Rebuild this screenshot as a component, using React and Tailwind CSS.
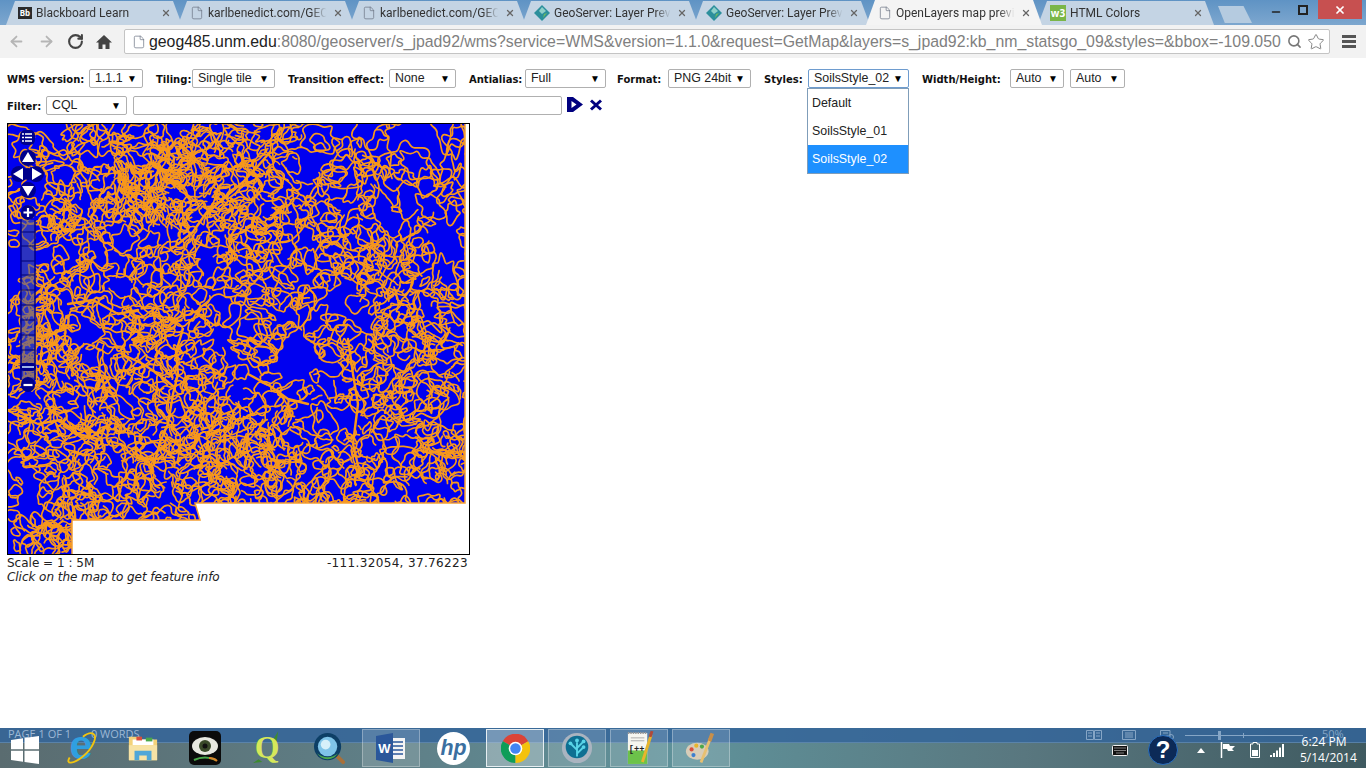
import { ArrowLeft, ArrowRight, RotateCw, File, Search, Star, X, Minus } from 'lucide-react';

// ─── Map drawing ──────────────────────────────────────────────────────────────
const makeRandom = (seed) => () => {
  seed = (seed + 0x6d2b79f5) | 0;
  let t = Math.imul(seed ^ (seed >>> 15), 1 | seed);
  t = (t + Math.imul(t ^ (t >>> 7), 61 | t)) ^ t;
  return ((t ^ (t >>> 14)) >>> 0) / 4294967296;
};

const SHAPE = '0,0 457,0 457,379 187,379 192,396 64,396 64,431 0,431';
const SHAPE_EDGE = '457,0 457,379 187,379 192,396 64,396 64,431';

// blue patches that the soil lines stay out of
const VOIDS = [
  [405, 18, 42, 14], [320, 8, 26, 7], [88, 32, 20, 9], [42, 8, 18, 6], [438, 120, 16, 26], [288, 238, 24, 14],
  [335, 180, 14, 20], [225, 215, 14, 9], [22, 370, 12, 22], [125, 275, 13, 9], [420, 368, 24, 8], [410, 70, 18, 11],
  [205, 38, 10, 6], [290, 108, 15, 7], [395, 320, 13, 9], [250, 350, 11, 7], [445, 290, 10, 15], [380, 245, 7, 14],
  [160, 372, 12, 6], [80, 210, 12, 7], [20, 130, 11, 8], [110, 345, 11, 7], [345, 60, 14, 8], [215, 170, 10, 6],
  [60, 120, 10, 7], [300, 40, 12, 7], [380, 105, 11, 8], [150, 110, 9, 6], [340, 295, 12, 9], [35, 60, 10, 7],
];

const HOTSPOTS = [
  [175, 65, 50], [115, 50, 35], [240, 70, 35], [165, 320, 40], [270, 40, 25], [30, 230, 35], [130, 180, 40], [100, 300, 40],
  [405, 250, 35], [385, 150, 25], [240, 300, 40], [330, 350, 35], [60, 90, 25], [420, 340, 25], [50, 400, 25],
];

const inVoid = (x, y) => VOIDS.some(([cx, cy, rx, ry]) => ((x - cx) / rx) ** 2 + ((y - cy) / ry) ** 2 < 1);

const heat = (x, y) => {
  let d = 0;
  for (const [cx, cy, r] of HOTSPOTS) d += Math.exp(-((x - cx) ** 2 + (y - cy) ** 2) / (r * r));
  return d;
};

// smooth a run of points with quadratic curves through their midpoints
const smoothPath = (pts, closed) => {
  const mid = (a, b) => `${((a[0] + b[0]) / 2).toFixed(1)} ${((a[1] + b[1]) / 2).toFixed(1)}`;
  const n = pts.length;
  if (closed) {
    let d = `M${mid(pts[n - 1], pts[0])}`;
    for (let i = 0; i < n; i++) d += `Q${pts[i][0].toFixed(1)} ${pts[i][1].toFixed(1)} ${mid(pts[i], pts[(i + 1) % n])}`;
    return d + 'Z';
  }
  let d = `M${pts[0][0].toFixed(1)} ${pts[0][1].toFixed(1)}`;
  for (let i = 1; i < n - 1; i++) d += `Q${pts[i][0].toFixed(1)} ${pts[i][1].toFixed(1)} ${mid(pts[i], pts[i + 1])}`;
  return d;
};

const buildSoilLines = () => {
  const rand = makeRandom(485);
  const lines = [];

  // closed soil units on a jittered grid, so the whole state is covered by cells
  for (let gy = 0; gy < 432; gy += 12) {
    for (let gx = 0; gx < 460; gx += 12) {
      const cx = gx + rand() * 12;
      const cy = gy + rand() * 12;
      if (inVoid(cx, cy) || rand() > 0.6) continue;
      const r = 4 + rand() * rand() * 22;
      const squash = 0.35 + rand() * 0.7;
      const tilt = rand() * Math.PI;
      const n = 8 + Math.floor(r / 1.5);
      const pts = [];
      for (let k = 0; k < n; k++) {
        const a = (k / n) * Math.PI * 2;
        const w = 0.6 + rand() * 0.8;
        const px = Math.cos(a) * r * w;
        const py = Math.sin(a) * r * w * squash;
        pts.push([cx + px * Math.cos(tilt) - py * Math.sin(tilt), cy + px * Math.sin(tilt) + py * Math.cos(tilt)]);
      }
      lines.push(smoothPath(pts, true));
    }
  }

  // winding lines, tighter and more of them where the map clumps to solid orange
  for (let i = 0; i < 2400; i++) {
    let x = rand() * 460;
    let y = rand() * 432;
    const h = heat(x, y);
    if (rand() > 0.16 + h * 0.85 || inVoid(x, y)) continue;
    let angle = rand() * Math.PI * 2;
    const steps = 4 + Math.floor(rand() * 16);
    const pts = [[x, y]];
    for (let s = 0; s < steps; s++) {
      angle += (rand() - 0.5) * 2.2;
      x += Math.cos(angle) * 3.2;
      y += Math.sin(angle) * 3.2;
      if (inVoid(x, y)) break;
      pts.push([x, y]);
    }
    if (pts.length > 2) lines.push(smoothPath(pts, false));
  }
  return lines;
};

const SOIL_LINES = buildSoilLines();

// the heavier strands that run across the map
const STRANDS = [
  'M146 340L152 318L160 300L165 270L170 250L168 228L175 205',
  'M165 262L150 250L135 240L118 232',
  'M196 92L215 75L235 58L250 42L262 28',
  'M170 120L185 108L196 92L205 80',
  'M340 215L345 250L350 280L345 320L352 350',
  'M8 290L30 300L52 296L70 310L90 315',
  'M60 180L85 176L110 190L130 186',
  'M240 250L262 262L280 275L300 280',
];

const MapDrawing = () => (
  <svg viewBox="0 0 461 430" className="block w-[461px] h-[430px] blur-[0.35px]">
    <defs>
      <clipPath id="nm-shape">
        <polygon points={SHAPE} />
      </clipPath>
    </defs>
    <polygon points={SHAPE} fill="#0000f0" />
    <g clipPath="url(#nm-shape)" fill="none" stroke="#f7981c" strokeLinejoin="round" strokeLinecap="round">
      <g strokeWidth="1.7">
        {SOIL_LINES.map((d, i) => <path key={i} d={d} />)}
      </g>
      <g strokeWidth="2.400">
        {STRANDS.map((d, i) => <path key={i} d={d} />)}
      </g>
    </g>
    <polyline points={SHAPE_EDGE} fill="none" stroke="#f5a033" strokeWidth="1.500" />

    {/* layer switcher */}
    <rect x="12" y="6" width="15" height="15" rx="5" fill="#00008b" />
    <g stroke="#fff" strokeWidth="1.6">
      <path d="M17 10H24M17 13.500H24M17 17H24" />
      <path d="M14 10H16M14 13.500H16M14 17H16" />
    </g>

    {/* pan buttons */}
    <g fill="#00008b">
      <circle cx="20" cy="34" r="8" />
      <circle cx="11" cy="50" r="8" />
      <circle cx="28" cy="50" r="8" />
      <circle cx="20" cy="66" r="8" />
      <circle cx="20" cy="50" r="6" />
    </g>
    <g fill="#fff">
      <path d="M20 28L26 38H14Z" />
      <path d="M5 50L15 44V56Z" />
      <path d="M34 50L24 44V56Z" />
      <path d="M20 72L26 62H14Z" />
    </g>

    {/* zoom bar */}
    <rect x="13" y="96" width="14" height="160" fill="#4a55a0" fillOpacity="0.6" />
    <g stroke="#00006e" strokeWidth="1">
      {[108, 122, 137, 151, 166, 181, 196, 211, 226, 240].map((y) => <path key={y} d={`M13 ${y}H27`} />)}
    </g>
    <path d="M13 96V256M27 96V256" stroke="#00008b" strokeWidth="1.5" />
    <rect x="13" y="81" width="14" height="15" rx="7" fill="#00008b" />
    <path d="M20 84V93M15.500 88.500H24.500" stroke="#fff" strokeWidth="2.200" />
    <rect x="12" y="239" width="16" height="8" rx="4" fill="#00008b" />
    <path d="M14 243H26" stroke="#9db4e8" strokeWidth="2" />
    <rect x="13" y="253" width="14" height="15" rx="7" fill="#00008b" />
    <path d="M15.500 261H24.500" stroke="#fff" strokeWidth="2.200" />
  </svg>
);

// ─── Browser chrome ───────────────────────────────────────────────────────────
const GeoServerIcon = () => (
  <svg viewBox="0 0 16 16" className="w-4 h-4 shrink-0">
    <path d="M8 0L16 8L8 16L0 8Z" fill="#2c8f9c" />
    <path d="M8 2L12 6L8 9L5 6Z" fill="#8fd0c9" />
    <path d="M10 9L13 8L9 13Z" fill="#6dbb5f" />
  </svg>
);

const PageIcon = () => <File size={14} strokeWidth={1.2} className="text-gray-500 shrink-0" />;

const BlackboardIcon = () => (
  <span className="w-[14px] h-[12px] bg-[#2b2b2b] text-white text-[8px] leading-[12px] text-center font-bold shrink-0">Bb</span>
);

const W3Icon = () => (
  <span className="w-4 h-4 bg-[#7ab648] text-white text-[10px] leading-4 text-center font-bold shrink-0">w3</span>
);

const TABS = [
  { title: 'Blackboard Learn', icon: BlackboardIcon },
  { title: 'karlbenedict.com/GEC', icon: PageIcon },
  { title: 'karlbenedict.com/GEC', icon: PageIcon },
  { title: 'GeoServer: Layer Previ', icon: GeoServerIcon },
  { title: 'GeoServer: Layer Previ', icon: GeoServerIcon },
  { title: 'OpenLayers map previ', icon: PageIcon, active: true },
  { title: 'HTML Colors', icon: W3Icon },
];

const Tab = ({ title, icon: Icon, active }) => (
  <div
    className={`w-[176px] h-[24px] -mr-[4px] pl-[12px] pr-[11px] flex items-center gap-[4px] [clip-path:polygon(0_100%,9px_0,calc(100%-9px)_0,100%_100%)] ${active ? 'bg-[#f4f4f4] relative z-10 h-[25px]' : 'bg-[#c4d4e4]'}`}
  >
    <Icon />
    <span className="flex-1 min-w-0 whitespace-nowrap text-[12px] text-[#333] font-['Roboto',sans-serif] [mask-image:linear-gradient(to_right,black_85%,transparent_98%)]">
      {title}
    </span>
    <X size={10} strokeWidth={3} className="text-[#666] shrink-0" />
  </div>
);

const TabStrip = () => (
  <div className="h-[25px] flex items-end pl-[6px] bg-[linear-gradient(to_bottom,#5f93c4,#7da7cf)] overflow-hidden">
    {TABS.map((t, i) => <Tab key={i} {...t} />)}
    <div className="w-[34px] h-[17px] ml-[8px] mb-[2px] bg-[#b5cbe0] [clip-path:polygon(0_0,75%_0,100%_100%,20%_100%)]" />
    <div className="ml-auto self-start flex items-start">
      <Minus size={12} strokeWidth={3} className="text-[#222] mt-[6px] mr-[16px]" />
      <div className="relative w-[10px] h-[10px] border-2 border-[#222] bg-[#7da7cf] mt-[5px] mr-[10px]">
        <div className="absolute -top-[4px] left-[1px] w-[9px] h-[9px] border border-[#222] -z-10" />
      </div>
      <div className="w-[44px] h-[19px] mr-[4px] bg-[#c75050] flex items-center justify-center">
        <X size={12} strokeWidth={3.5} className="text-white" />
      </div>
    </div>
  </div>
);

const Toolbar = () => (
  <div className="h-[33px] bg-[#f2f2f2] flex items-center">
    <div className="w-[124px] shrink-0 flex items-center pl-[8px]">
      <ArrowLeft size={17} strokeWidth={2.5} className="text-[#b5b5b5]" />
      <ArrowRight size={17} strokeWidth={2.5} className="text-[#b5b5b5] ml-[13px]" />
      <RotateCw size={17} strokeWidth={3} className="text-[#444] ml-[12px]" />
      <svg viewBox="0 0 16 16" className="w-[16px] h-[16px] ml-[12px] text-[#444]">
        <path d="M8 1L16 8.500H13.500V15H9.500V10.500H6.500V15H2.500V8.500H0Z" fill="currentColor" />
      </svg>
    </div>
    <div className="w-[1206px] h-[25px] bg-white border border-[#c4c4c4] rounded-[2px] flex items-center pl-[7px] pr-[4px]">
      <File size={14} strokeWidth={1.2} className="text-gray-500 shrink-0 mr-[3px]" />
      <span className="w-[1134px] whitespace-nowrap text-[15.85px] text-[#808080] font-['Liberation_Sans',sans-serif]">
        <span className="text-[#222]">geog485.unm.edu</span>:8080/geoserver/s_jpad92/wms?service=WMS&amp;version=1.1.0&amp;request=GetMap&amp;layers=s_jpad92:kb_nm_statsgo_09&amp;styles=&amp;bbox=-109.050
      </span>
      <Search size={15} strokeWidth={2.5} className="text-[#777] ml-[6px]" />
      <Star size={18} strokeWidth={1.2} className="text-[#777] ml-[5px]" />
    </div>
    <div className="w-[14px] ml-[12px] flex flex-col gap-[2px]">
      <div className="h-[3px] bg-[#555]" />
      <div className="h-[3px] bg-[#555]" />
      <div className="h-[3px] bg-[#555]" />
    </div>
  </div>
);

// ─── Preview page ─────────────────────────────────────────────────────────────
const Label = ({ children, className = '' }) => (
  <span className={`translate-y-px text-[10px] font-bold text-[#111] whitespace-nowrap font-['DejaVu_Sans',sans-serif] ${className}`}>{children}</span>
);

const FakeSelect = ({ value, className = '', focused }) => (
  <div
    className={`h-[19px] pl-[5px] pr-[5px] flex items-center justify-between bg-white border rounded-[2px] text-[12.400px] text-[#222] font-['Liberation_Sans',sans-serif] ${focused ? 'border-[#6e9ccf]' : 'border-[#b0b0b0]'} ${className}`}
  >
    <span className="whitespace-nowrap">{value}</span>
    <span className="text-[10px] text-black">▼</span>
  </div>
);

const OptionsRow = () => (
  <div className="flex items-center pl-[7px] h-[19px]">
    <Label className="w-[82px]">WMS version:</Label>
    <FakeSelect value="1.1.1" className="w-[54px]" />
    <Label className="w-[36px] ml-[13px]">Tiling:</Label>
    <FakeSelect value="Single tile" className="w-[83px]" />
    <Label className="w-[101px] ml-[13px]">Transition effect:</Label>
    <FakeSelect value="None" className="w-[67px]" />
    <Label className="w-[56px] ml-[13px]">Antialias:</Label>
    <FakeSelect value="Full" className="w-[81px]" />
    <Label className="w-[51px] ml-[11px]">Format:</Label>
    <FakeSelect value="PNG 24bit" className="w-[83px]" />
    <Label className="w-[44px] ml-[13px]">Styles:</Label>
    <div className="relative">
      <FakeSelect value="SoilsStyle_02" className="w-[101px]" focused />
      <div className="absolute -left-px top-[19px] w-[102px] bg-white border border-[#7f9db9] text-[12.400px] text-[#222] font-['Liberation_Sans',sans-serif] z-10">
        <div className="h-[28px] pl-[4px] flex items-center">Default</div>
        <div className="h-[28px] pl-[4px] flex items-center">SoilsStyle_01</div>
        <div className="h-[28px] pl-[4px] flex items-center bg-[#1e90ff] text-white">SoilsStyle_02</div>
      </div>
    </div>
    <Label className="w-[88px] ml-[13px]">Width/Height:</Label>
    <FakeSelect value="Auto" className="w-[54px]" />
    <FakeSelect value="Auto" className="w-[55px] ml-[6px]" />
  </div>
);

const FilterRow = () => (
  <div className="flex items-center pl-[7px] mt-[7px] h-[20px]">
    <Label className="w-[39px]">Filter:</Label>
    <FakeSelect value="CQL" className="w-[81px]" />
    <div className="w-[429px] h-[19px] ml-[6px] bg-white border border-[#b0b0b0] rounded-[2px]" />
    <svg viewBox="0 0 18 17" className="w-[18px] h-[17px] ml-[4px] -mt-[1px]">
      <path d="M1 1H7L17 8.500L7 16H1Z M5.500 5V12L10.500 8.500Z" fill="#00007f" fillRule="evenodd" />
    </svg>
    <svg viewBox="0 0 14 12" className="w-[14px] h-[12px] ml-[5px] -mt-[1px]">
      <path d="M2 1.500L12 10.500M12 1.500L2 10.500" stroke="#00007f" strokeWidth="3" />
    </svg>
  </div>
);

const MapPanel = () => (
  <div className="ml-[7px] mt-[8px] w-[463px] font-['DejaVu_Sans',sans-serif] text-[12px] leading-[14px] text-[#222]">
    <div className="h-[432px] border border-black bg-white overflow-hidden">
      <MapDrawing />
    </div>
    <div className="flex justify-between pr-[2px] mt-[1px]">
      <span>Scale = 1 : 5M</span>
      <span className="tracking-[0.35px]">-111.32054, 37.76223</span>
    </div>
    <div className="italic whitespace-nowrap tracking-[-0.05px]">Click on the map to get feature info</div>
  </div>
);

// ─── Taskbar ──────────────────────────────────────────────────────────────────
const IeIcon = () => (
  <svg viewBox="0 0 36 36" className="w-[34px] h-[34px]">
    <text x="18" y="30" textAnchor="middle" fontSize="44" fontWeight="700" fill="#2f9fe0" fontFamily="'Liberation Sans', sans-serif">e</text>
    <path d="M6 28C1 36 10 35 20 27C30 19 36 6 31 3C28 1 24 3 20 6" fill="none" stroke="#f2c40f" strokeWidth="2" />
  </svg>
);

const FolderIcon = () => (
  <svg viewBox="0 0 34 34" className="w-[32px] h-[32px]">
    <path d="M2 5H14L16 8H32V30H2Z" fill="#f3d27a" />
    <path d="M6 8H28V14H6Z" fill="#fff" />
    <path d="M10 5H16V9H10Z" fill="#d94f3d" />
    <path d="M20 6H27V10H20Z" fill="#4aa84a" />
    <path d="M2 14H32V30H2Z" fill="#f7e3a5" />
    <path d="M8 20H26V30H21V25H13V30H8Z" fill="#4fa7d8" />
  </svg>
);

const CameraIcon = () => (
  <svg viewBox="0 0 32 34" className="w-[32px] h-[34px]">
    <rect x="0" y="0" width="32" height="34" rx="5" fill="#0b0b0b" />
    <ellipse cx="16" cy="15" rx="13" ry="9" fill="#e8e8e0" />
    <circle cx="16" cy="15" r="6" fill="#3a4a2a" />
    <circle cx="16" cy="15" r="2.500" fill="#111" />
    <path d="M5 29Q16 24 27 29" stroke="#4aa84a" strokeWidth="2" fill="none" />
    <path d="M20 27Q25 27 28 30" stroke="#d8842a" strokeWidth="2" fill="none" />
  </svg>
);

const QgisIcon = () => (
  <svg viewBox="0 0 30 36" className="w-[28px] h-[34px]">
    <path d="M21 10L27 0L25 13Z" fill="#3d8b2e" />
    <path d="M6 30L0 34L10 33Z" fill="#3d8b2e" />
    <text x="15" y="29" textAnchor="middle" fontSize="34" fontWeight="700" fill="#d6e85a" fontFamily="'Liberation Serif', serif">Q</text>
  </svg>
);

const MagnifierIcon = () => (
  <svg viewBox="0 0 34 34" className="w-[33px] h-[33px]">
    <path d="M22 22L31 31" stroke="#a8703a" strokeWidth="4" strokeLinecap="round" />
    <circle cx="15" cy="15" r="14" fill="#0d3f66" />
    <circle cx="15" cy="15" r="10" fill="#7fc4e8" />
    <circle cx="13" cy="13" r="5" fill="#d6f0fa" />
    <path d="M4 22Q15 30 26 22L22 26Q15 30 8 26Z" fill="#4aa84a" />
  </svg>
);

const WordIcon = () => (
  <svg viewBox="0 0 30 30" className="w-[30px] h-[30px]">
    <path d="M10 5H29V26H10Z" fill="#f4f4f4" />
    <path d="M17 9H27M17 13H27M17 17H27M17 21H27" stroke="#2b579a" strokeWidth="1.500" />
    <path d="M0 3L17 0V30L0 27Z" fill="#2b579a" />
    <text x="8.500" y="20" textAnchor="middle" fontSize="13" fontWeight="700" fill="#fff" fontFamily="'Liberation Sans', sans-serif">W</text>
  </svg>
);

const HpIcon = () => (
  <svg viewBox="0 0 34 34" className="w-[33px] h-[33px]">
    <circle cx="17" cy="17" r="17" fill="#fff" />
    <text x="17" y="24" textAnchor="middle" fontSize="22" fontWeight="700" fontStyle="italic" fill="#3b6fa0" fontFamily="'Liberation Sans', sans-serif">hp</text>
  </svg>
);

const ChromeIcon = () => (
  <svg viewBox="0 0 32 32" className="w-[29px] h-[29px]">
    <path d="M16 16L2 8A16 16 0 0 1 30 8Z" fill="#db4437" />
    <path d="M16 16L2 8A16 16 0 0 0 16 32Z" fill="#0f9d58" />
    <path d="M16 16L30 8A16 16 0 0 1 16 32Z" fill="#f4c20d" />
    <circle cx="16" cy="16" r="7.500" fill="#fff" />
    <circle cx="16" cy="16" r="5.800" fill="#4285f4" />
  </svg>
);

const TreeIcon = () => (
  <svg viewBox="0 0 34 34" className="w-[32px] h-[32px]">
    <circle cx="17" cy="17" r="16" fill="#aab4c0" />
    <circle cx="17" cy="16" r="12" fill="#0e6f92" />
    <g stroke="#59d5e8" strokeWidth="2" fill="none">
      <path d="M17 26V11M17 19L11 13M17 17L23 11M17 23L23 17" />
    </g>
    <g fill="#59d5e8">
      <circle cx="17" cy="9" r="2" />
      <circle cx="10" cy="12" r="2" />
      <circle cx="24" cy="10" r="2" />
      <circle cx="24" cy="16" r="2" />
    </g>
  </svg>
);

const NotepadIcon = () => (
  <svg viewBox="0 0 30 36" className="w-[29px] h-[35px]">
    <path d="M3 2H23V34H3Z" fill="#f6f6f0" />
    <path d="M3 20H23V34H3Z" fill="#6cc24a" />
    <path d="M3 2H23" stroke="#999" strokeWidth="2" strokeDasharray="1.500 1" />
    <path d="M6 7H20M6 10H20" stroke="#aaa" strokeWidth="1" />
    <text x="12" y="22" textAnchor="middle" fontSize="9" fontWeight="700" fill="#222" fontFamily="'Liberation Mono', monospace">[++</text>
    <path d="M18 32L27 4" stroke="#e8b52c" strokeWidth="3" />
    <path d="M26 6L28 0" stroke="#b04a3a" strokeWidth="3" />
  </svg>
);

const PaintIcon = () => (
  <svg viewBox="0 0 34 34" className="w-[32px] h-[33px]">
    <ellipse cx="13" cy="20" rx="12" ry="9" fill="#d8cdb8" />
    <circle cx="7" cy="18" r="2.200" fill="#d94f3d" />
    <circle cx="12" cy="14" r="2.200" fill="#e8b52c" />
    <circle cx="18" cy="15" r="2.200" fill="#4aa84a" />
    <circle cx="9" cy="24" r="2.200" fill="#3d7fcf" />
    <path d="M17 32L27 6" stroke="#e8c070" strokeWidth="3" />
    <path d="M26 9L29 1" stroke="#c88f4a" strokeWidth="4" />
  </svg>
);

const TASK_ITEMS = [
  { icon: IeIcon }, { icon: FolderIcon }, { icon: CameraIcon }, { icon: QgisIcon }, { icon: MagnifierIcon },
  { icon: WordIcon, open: true }, { icon: HpIcon }, { icon: ChromeIcon, open: true, active: true },
  { icon: TreeIcon, open: true }, { icon: NotepadIcon, open: true }, { icon: PaintIcon, open: true },
];

const TaskItem = ({ icon: Icon, open, active }) => (
  <div className={`w-[58px] h-[38px] mx-[2px] flex items-center justify-center border ${active ? 'border-[#e6eef2] bg-white/30' : open ? 'border-white/30 bg-white/15' : 'border-transparent'}`}>
    <Icon />
  </div>
);

const Tray = () => (
  <div className="ml-auto flex items-center h-full pt-[4px] text-white">
    <svg viewBox="0 0 16 11" className="w-[16px] h-[11px] mr-[20px]">
      <rect x="0.500" y="0.500" width="15" height="10" rx="1" fill="#111" stroke="#eee" />
      <path d="M2.500 3H13.500M2.500 5.500H13.500M4.500 8H11.500" stroke="#eee" strokeWidth="1.200" strokeDasharray="1 1" />
    </svg>
    <div className="w-[30px] h-[30px] mr-[19px] rounded-full bg-[#0c2a57] border border-[#2a6fc0] text-[24px] leading-[28px] font-bold text-center font-['Liberation_Sans',sans-serif]">?</div>
    <div className="w-0 h-0 border-x-[4px] border-x-transparent border-b-[5px] border-b-white mr-[15px]" />
    <svg viewBox="0 0 15 16" className="w-[15px] h-[16px] mr-[15px]">
      <path d="M1.500 0V16" stroke="#fff" strokeWidth="1.500" />
      <path d="M3 2H9L10 4H15L12 7L14 9H8L7 7H3Z" fill="#fff" />
    </svg>
    <svg viewBox="0 0 10 16" className="w-[10px] h-[16px] mr-[10px]">
      <path d="M3 0.500H7V2H9.500V15.500H0.500V2H3Z" fill="none" stroke="#fff" />
      <rect x="2" y="8" width="6" height="6" fill="#fff" />
    </svg>
    <svg viewBox="0 0 16 13" className="w-[16px] h-[13px] mr-[14px]">
      <path d="M0 11H2V13H0ZM3 9H5V13H3ZM6 6.500H8V13H6ZM9 3.500H11V13H9ZM12 0H14V13H12Z" fill="#fff" />
    </svg>
    <div className="w-[48px] mr-[18px] text-[12px] leading-[16px] text-center whitespace-nowrap font-['Open_Sans',sans-serif]">
      <div>6:24 PM</div>
      <div>5/14/2014</div>
    </div>
  </div>
);

// ghost of the word status bar: view buttons and zoom slider
const StatusGhost = () => (
  <div className="absolute left-[1086px] top-0 h-[14px] flex items-center text-[#86a6c6]">
    <svg viewBox="0 0 16 10" className="w-[16px] h-[10px]">
      <path d="M0.500 0.500H7.500V9.500H0.500ZM8.500 0.500H15.500V9.500H8.500ZM2 3H6M2 6H6M10 3H14M10 6H14" fill="none" stroke="currentColor" />
    </svg>
    <svg viewBox="0 0 14 10" className="w-[14px] h-[10px] ml-[20px]">
      <path d="M0.500 0.500H13.500V9.500H0.500ZM3 3H11M3 5H11M3 7H11" fill="none" stroke="currentColor" />
    </svg>
    <svg viewBox="0 0 14 10" className="w-[14px] h-[10px] ml-[24px]">
      <path d="M0.500 0.500H10V9.500H0.500ZM3 3H8M3 6H8" fill="none" stroke="currentColor" />
      <circle cx="11" cy="7" r="2.500" fill="none" stroke="currentColor" />
    </svg>
    <div className="relative w-[118px] h-px ml-[11px] bg-[#86a6c6]">
      <div className="absolute left-[33px] -top-[4px] w-[3px] h-[9px] bg-[#86a6c6]" />
      <div className="absolute left-[58px] -top-[2px] w-px h-[5px] bg-[#86a6c6]" />
    </div>
    <span className="ml-[19px] text-[11px] leading-[12px] -translate-y-px font-['Open_Sans',sans-serif]">50%</span>
  </div>
);

const Taskbar = () => (
  <div className="relative h-[40px] flex items-center bg-[linear-gradient(to_right,#5a6c70,#5f8088_30%,#5f929a_50%,#59777f_75%,#3f5a60)] overflow-hidden">
    <div className="absolute left-0 right-0 top-0 h-[15px] bg-[#34659a]/85 border-b border-[#7a9dbd]/50" />
    <div className="absolute left-[8px] top-0 text-[11px] leading-[12px] text-[#9db8d4] whitespace-nowrap font-['Open_Sans',sans-serif]">
      PAGE 1 OF 1 <span className="ml-[17px]">0 WORDS</span>
    </div>
    <StatusGhost />

    <div className="relative flex items-center h-full w-full">
      <div className="w-[50px] flex justify-center pt-[3px]">
        <svg viewBox="0 0 28 28" className="w-[28px] h-[28px]">
          <path d="M0 4L12 2.300V13.300H0ZM13.500 2L28 0V13.300H13.500ZM0 14.700H12V25.700L0 24ZM13.500 14.700H28V28L13.500 26Z" fill="#fff" />
        </svg>
      </div>
      {TASK_ITEMS.map((t, i) => <TaskItem key={i} {...t} />)}
      <Tray />
    </div>
  </div>
);

export default function App() {
  return (
    <div className="w-[1366px] h-[768px] flex flex-col overflow-hidden bg-white">
      <TabStrip />
      <Toolbar />
      <main className="flex-1 min-h-0 pt-[11px]">
        <OptionsRow />
        <FilterRow />
        <MapPanel />
      </main>
      <Taskbar />
    </div>
  );
}
